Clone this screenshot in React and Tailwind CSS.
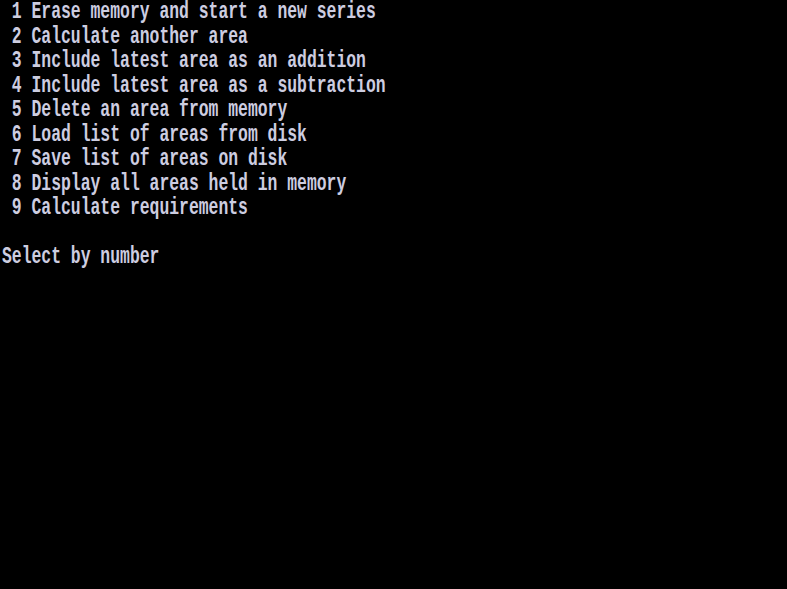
const lines = [
  " 1 Erase memory and start a new series",
  " 2 Calculate another area",
  " 3 Include latest area as an addition",
  " 4 Include latest area as a subtraction",
  " 5 Delete an area from memory",
  " 6 Load list of areas from disk",
  " 7 Save list of areas on disk",
  " 8 Display all areas held in memory",
  " 9 Calculate requirements",
  "",
  "Select by number",
];

export default function App() {
  return (
    <div className="w-[787px] h-[589px] bg-black pl-[2px]">
      {lines.map((line, i) => (
        <div
          key={i}
          className="h-[24.5px] w-[760px] leading-[24.5px] text-[24px] font-bold text-[#cdcde0] whitespace-pre origin-left scale-x-[0.683]"
          style={{ fontFamily: '"Liberation Mono", monospace' }}
        >
          {line}
        </div>
      ))}
    </div>
  );
}
